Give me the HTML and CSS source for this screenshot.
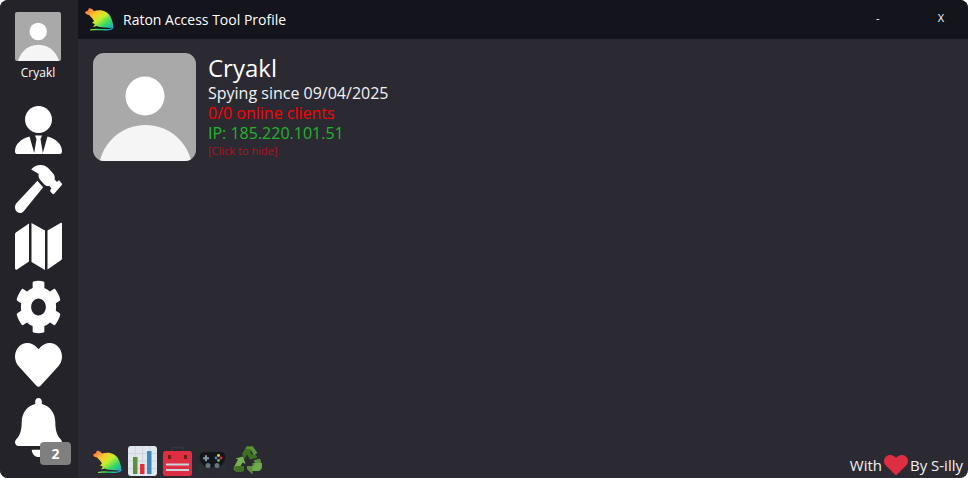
FILE: index.html
```html
<!DOCTYPE html>
<html lang="en">
<head>
<meta charset="utf-8">
<title>Raton Access Tool Profile</title>
<link rel="stylesheet" href="styles.css">
</head>
<body>
<svg class="defs" width="0" height="0" aria-hidden="true">
  <defs>
    <linearGradient id="rainbow" x1="0" y1="0" x2="1" y2="1">
      <stop offset="0" stop-color="#ff5a4a"/>
      <stop offset=".3" stop-color="#ffc62e"/>
      <stop offset=".5" stop-color="#c8ee2c"/>
      <stop offset=".72" stop-color="#2fd86a"/>
      <stop offset="1" stop-color="#1f8fe8"/>
    </linearGradient>
    <symbol id="rat" viewBox="0 0 29 23">
      <path fill="url(#rainbow)" d="M0 4 3 2.5 4 0 7 1 9 3C13 2 18 2 21 4 25 6 27 11 28 16 28.500 18 27.500 20 25 20L14 19 12 18 8 19 10 16 7 15 9 13 7 10 4 7 1 6ZM5 21.500C10 20 15 21 20 21 24 21.500 27 21 28 18L28.800 19C28 22 24 22.800 20 22.500 15 22 10 22 5 22.500Z"/>
    </symbol>
    <symbol id="avatar" viewBox="0 0 103 108" preserveAspectRatio="none">
      <rect width="103" height="108" fill="#a9a9a9"/>
      <circle cx="52" cy="43" r="19.500" fill="#fff"/>
      <circle cx="52.500" cy="119" r="47" fill="#f5f5f5"/>
    </symbol>
  </defs>
</svg>
<div class="window">
  <aside class="sidebar">
    <svg class="side-avatar"><use href="#avatar"/></svg>
    <div class="side-name">Cryakl</div>
    <nav class="side-nav">
      <svg class="nav-icon person" viewBox="0 0 47 50"><circle cx="23.500" cy="13.500" r="13.500"/><path d="M0 45.500C0 38 6 33 14.500 30.500L19.500 48H2C.8 48 0 47 0 45.500ZM47 45.500C47 38 41 33 32.500 30.500L27.500 48H45C46.200 48 47 47 47 45.500ZM20 29.500H27L25.500 33 28 48H19L21.500 33Z"/></svg>
      <svg class="nav-icon hammer" viewBox="0 0 576 512" preserveAspectRatio="none"><path d="M571.31 193.94l-22.63-22.63c-6.25-6.25-16.38-6.25-22.63 0l-11.31 11.31-28.9-28.9c5.63-21.31.36-44.9-16.35-61.61l-45.25-45.25c-62.48-62.48-163.79-62.48-226.28 0l90.51 45.25v18.75c0 16.97 6.74 33.25 18.75 45.25l49.14 49.14c16.71 16.71 40.3 21.98 61.61 16.35l28.9 28.9-11.31 11.31c-6.25 6.25-6.25 16.38 0 22.63l22.63 22.63c6.25 6.25 16.38 6.25 22.63 0l90.51-90.51c6.23-6.24 6.23-16.37-.02-22.62zm-286.72-15.2c-3.7-3.7-6.84-7.79-9.85-11.95L19.64 404.96c-25.57 23.88-26.26 64.19-1.53 88.93s65.05 24.05 88.93-1.53l238.13-255.07c-3.96-2.91-7.9-5.9-11.44-9.44l-49.14-49.11z"/></svg>
      <svg class="nav-icon map" viewBox="0 0 47 49"><path d="M0 12.500C0 11.500.6 10.500 1.500 10L14 1.500V39.500L2 47.500C1 48 0 47.500 0 46.300ZM16.500 1 30 8.500V48L16.500 40ZM46 .8C46.500.5 47 1 47 1.800V36C47 37 46.500 38 45.500 38.500L32.500 47.500V8.500Z"/></svg>
      <svg class="nav-icon gear" viewBox="0 0 512 512" preserveAspectRatio="none"><path d="M487.4 315.7l-42.6-24.6c4.3-23.2 4.3-47 0-70.2l42.6-24.6c4.9-2.8 7.1-8.6 5.5-14-11.1-35.6-30-67.8-54.7-94.6-3.8-4.1-10-5.1-14.8-2.3L380.8 110c-17.9-15.4-38.5-27.3-60.8-35.1V25.8c0-5.6-3.9-10.5-9.4-11.7-36.7-8.2-74.3-7.8-109.2 0-5.5 1.2-9.4 6.1-9.4 11.7V75c-22.2 7.9-42.8 19.8-60.8 35.1L88.7 85.5c-4.9-2.8-11-1.9-14.8 2.3-24.7 26.7-43.6 58.9-54.700 94.6-1.7 5.4.6 11.2 5.5 14L67.3 221c-4.3 23.2-4.3 47 0 70.2l-42.6 24.6c-4.9 2.8-7.1 8.6-5.5 14 11.1 35.6 30 67.8 54.7 94.6 3.8 4.1 10 5.1 14.8 2.3l42.6-24.6c17.9 15.4 38.5 27.3 60.8 35.1v49.2c0 5.6 3.9 10.5 9.4 11.7 36.7 8.2 74.3 7.8 109.2 0 5.5-1.2 9.4-6.1 9.4-11.7v-49.2c22.2-7.9 42.8-19.8 60.8-35.1l42.6 24.6c4.9 2.8 11 1.9 14.8-2.3 24.7-26.7 43.6-58.9 54.7-94.6 1.5-5.5-.7-11.3-5.6-14.1zM256 336c-44.1 0-80-35.9-80-80s35.9-80 80-80 80 35.9 80 80-35.9 80-80 80z"/></svg>
      <svg class="nav-icon heart" viewBox="0 0 512 472" preserveAspectRatio="none"><path transform="translate(0 -32)" d="M462.3 62.6C407.5 15.9 326 24.3 275.7 76.2L256 96.5l-19.7-20.3C186.1 24.3 104.5 15.9 49.7 62.6c-62.8 53.6-66.1 149.8-9.9 207.9l193.5 199.8c12.5 12.9 32.8 12.9 45.3 0l193.5-199.8c56.3-58.1 53-154.3-9.8-207.9z"/></svg>
      <div class="bell-wrap">
        <svg class="nav-icon bell" viewBox="0 0 448 512" preserveAspectRatio="none"><path d="M224 512c35.32 0 63.97-28.65 63.97-64H160.03c0 35.35 28.65 64 63.97 64zm215.39-149.71c-19.32-20.76-55.47-51.99-55.47-154.29 0-77.7-54.48-139.9-127.94-155.16V32c0-17.67-14.32-32-31.98-32s-31.98 14.33-31.98 32v20.84C118.56 68.1 64.08 130.3 64.08 208c0 102.3-36.15 133.53-55.47 154.29-6 6.45-8.66 14.16-8.61 21.71.11 16.4 12.98 32 32.1 32h383.8c19.12 0 32-15.6 32.1-32 .05-7.55-2.61-15.27-8.61-21.71z"/></svg>
        <span class="badge">2</span>
      </div>
    </nav>
  </aside>
  <div class="main">
    <header class="titlebar">
      <svg class="title-logo"><use href="#rat"/></svg>
      <span class="title-text">Raton Access Tool Profile</span>
      <span class="win-btn win-min">-</span>
      <span class="win-btn win-close">X</span>
    </header>
    <section class="content">
      <svg class="profile-avatar"><use href="#avatar"/></svg>
      <div class="profile-info">
        <div class="p-name">Cryakl</div>
        <div class="p-line p-since">Spying since 09/04/2025</div>
        <div class="p-line p-online">0/0 online clients</div>
        <div class="p-line p-ip">IP: 185.220.101.51</div>
        <div class="p-hide">[Click to hide]</div>
      </div>
    </section>
    <footer class="footer">
      <div class="tools">
        <svg class="tool rat-tool"><use href="#rat"/></svg>
        <svg class="tool" viewBox="0 0 29 30">
          <rect width="29" height="30" rx="3" fill="#e1e8ed"/>
          <path d="M0 7.500H29M0 15H29M0 22.500H29M7.200 0V30M14.500 0V30M21.800 0V30" stroke="#ccd6dd" stroke-width="1"/>
          <rect x="5" y="11" width="4.500" height="17" fill="#5c913b"/>
          <rect x="12" y="18" width="4.500" height="10" fill="#dd2e44"/>
          <rect x="19" y="5" width="4.500" height="23" fill="#3b88c3"/>
        </svg>
        <svg class="tool" viewBox="0 0 29 30">
          <path d="M9 6V2.500C9 2 9.500 1.500 10 1.500H19C19.500 1.500 20 2 20 2.500V6" fill="none" stroke="#31373d" stroke-width="1.500"/>
          <rect y="5" width="29" height="25" rx="2.500" fill="#dd2e44"/>
          <rect x="5" y="9" width="3" height="4" rx=".8" fill="#662113"/>
          <rect x="21" y="9" width="3" height="4" rx=".8" fill="#662113"/>
          <rect x="3" y="17.500" width="23" height="2" fill="#ccd6dd"/>
          <rect x="3" y="23" width="23" height="2" fill="#ccd6dd"/>
        </svg>
        <svg class="tool" viewBox="0 0 29 30">
          <path d="M3 14 0 25C-.300 27.500 3 28.500 4.500 26.500L9 20ZM26 14 29 25C29.300 27.500 26 28.500 24.500 26.500L20 20Z" fill="#292f33"/>
          <path d="M6 6H23C26.500 6 28 9.500 27 13.500 26 18 23 21 19.500 21H9.500C6 21 3 18 2 13.500 1 9.500 2.500 6 6 6Z" fill="#14171a"/>
          <path d="M7 9.200H9V11.200H11V13.200H9V15.200H7V13.200H5V11.200H7Z" fill="#8899a6"/>
          <circle cx="10" cy="19.500" r="2.500" fill="#66757f"/>
          <circle cx="19" cy="19.500" r="2.500" fill="#66757f"/>
          <circle cx="20.500" cy="9.500" r="1.400" fill="#ffcc4d"/>
          <circle cx="18" cy="12" r="1.400" fill="#3b88c3"/>
          <circle cx="23" cy="12" r="1.400" fill="#dd2e44"/>
          <circle cx="20.500" cy="14.500" r="1.400" fill="#77b255"/>
        </svg>
        <svg class="tool" viewBox="0 0 29 30">
          <path d="M9 8 13.500 .5H20L17 6 19 9 21 6 24.500 11.500 17 13.500 14 8.500 11.500 13Z" fill="#3e721d"/>
          <path d="M13.500.5H20L24.500 7 21 9 17 3H13Z" fill="#5c913b"/>
          <path d="M1 21 5 13.500 2.500 12.500 10 10.500 12.500 18 9.500 16.500 6.500 22 8.500 25.500H4C1.500 25.500 0 23 1 21Z" fill="#77b255"/>
          <path d="M4.500 25.500H11V20L4 20 1 21C1 24 2.500 25.500 4.500 25.500Z" fill="#3e721d"/>
          <path d="M14 20H21L22.500 18 20.500 14.500 27 12.500 29 20C29 22.500 27 25 25 25H19.500V28.500L14 23Z" fill="#5c913b"/>
          <path d="M19.500 17H29V21C28.500 23.500 27 25 25 25H19.500Z" fill="#77b255" opacity=".75"/>
        </svg>
      </div>
      <div class="credit">With<svg class="credit-heart" viewBox="0 0 512 472" preserveAspectRatio="none"><path transform="translate(0 -32)" d="M462.3 62.6C407.5 15.9 326 24.3 275.7 76.2L256 96.5l-19.7-20.3C186.1 24.3 104.5 15.9 49.7 62.6c-62.8 53.6-66.1 149.8-9.9 207.9l193.5 199.8c12.5 12.9 32.8 12.9 45.3 0l193.5-199.8c56.3-58.1 53-154.3-9.8-207.9z"/></svg>By S-illy</div>
    </footer>
  </div>
</div>
</body>
</html>
```

FILE: styles.css
```css
* { box-sizing: border-box; }
html, body { margin: 0; padding: 0; height: 100%; background: #fff; }
body { font-family: "Open Sans", "Noto Sans", sans-serif; overflow: hidden; }
.defs { position: absolute; }
svg { display: block; }

.window {
  display: flex;
  width: 968px;
  height: 478px;
  border-radius: 8px;
  overflow: hidden;
  background: #2b2a33;
  color: #fff;
}

.sidebar {
  width: 78px;
  flex: none;
  background: #232329;
  padding: 12px 15px 0;
}
.side-avatar { width: 46px; height: 49px; border-radius: 2px; }
.side-name {
  width: 46px;
  margin-top: 4px;
  height: 16px;
  line-height: 16px;
  font-size: 12px;
  text-align: center;
  white-space: nowrap;
}
.side-nav {
  display: flex;
  flex-direction: column;
  gap: 9px;
  margin-top: 25px;
}
.nav-icon { width: 47px; fill: #fff; }
.person { height: 50px; }
.hammer { height: 48px; }
.map { height: 49px; }
.gear { height: 54px; }
.heart { height: 46px; }
.bell { height: 59px; }
.bell-wrap { position: relative; width: 47px; }
.badge {
  position: absolute;
  left: 25px;
  top: 44px;
  width: 31px;
  height: 23px;
  border-radius: 4px;
  background: #7f7f7f;
  font-size: 14px;
  font-weight: 700;
  line-height: 23px;
  text-align: center;
}

.main { flex: 1; display: flex; flex-direction: column; min-width: 0; }

.titlebar {
  height: 39px;
  flex: none;
  display: flex;
  align-items: center;
  background: #14141c;
  padding-left: 7px;
}
.title-logo { width: 29px; height: 23px; }
.title-text { margin-left: 9px; font-size: 14px; }
.win-btn { font-size: 11px; line-height: 1; margin-top: -4px; }
.win-min { margin-left: auto; }
.win-close { margin-left: 58px; margin-right: 24px; }

.content {
  flex: 1;
  display: flex;
  gap: 12px;
  padding: 14px 15px 0;
}
.profile-avatar { width: 103px; height: 108px; border-radius: 11px; flex: none; }
.profile-info { display: flex; flex-direction: column; }
.p-name { font-size: 24px; line-height: 30px; }
.p-line { font-size: 16px; line-height: 20px; }
.p-since { color: #f2f2f2; }
.p-online { color: #f00; }
.p-ip { color: #22b52b; }
.p-hide { font-size: 11px; line-height: 16px; color: #b3121d; }

.footer {
  height: 32px;
  flex: none;
  display: flex;
  align-items: flex-end;
  justify-content: space-between;
  padding: 0 5px 2px 15px;
}
.tools { display: flex; gap: 6px; }
.tool { width: 29px; height: 30px; }
.rat-tool { height: 28px; margin-top: 2px; }
.credit {
  display: flex;
  align-items: center;
  font-size: 15px;
  line-height: 22px;
  color: #f2f2f2;
}
.credit-heart { width: 24px; height: 21px; fill: #dd2e44; margin: 0 2px; }
```
